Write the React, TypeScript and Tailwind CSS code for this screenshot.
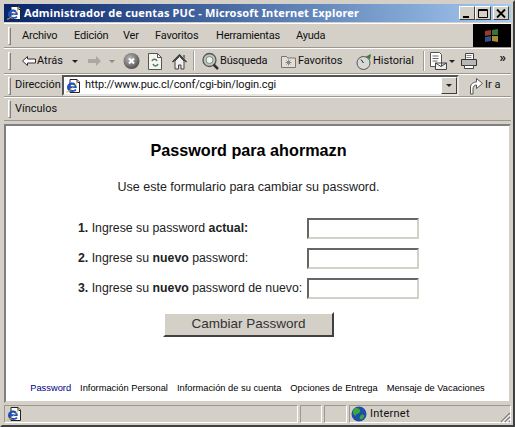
import type { ReactNode } from 'react'

const ui = 'font-["Roboto",sans-serif] text-[11px] text-[#111]'

// little IE page icon, used in the title bar, address box and status bar
function IeIcon() {
  return (
    <svg width="16" height="16" viewBox="0 0 16 16" className="shrink-0">
      <path d="M5 1.500h7l2.500 2.500v10.500H5z" fill="#fff" stroke="#222" />
      <path d="M12 1.500v3h2.500" fill="#ddd" stroke="#222" />
      <path d="M2 9.500c0-3 2.300-5 5-5s4.800 2 4.800 5.400H4.800c.2 2.400 3.400 3 5.600 1l1.200 1.400c-3.400 3-9.600 1.600-9.600-2.800zM4.900 8.200h4.400c-.4-2-3.800-2-4.400 0z" fill="#1d50c4" />
      <path d="M1 14C3 15 9 9 13 3.500" stroke="#e2b13a" fill="none" />
    </svg>
  )
}

function Grip() {
  return <div className="mr-[4px] h-[18px] w-[3px] shrink-0 border border-t-white border-l-white border-b-[#808080] border-r-[#808080]" />
}

function Sep({ className }: { className: string }) {
  return <div className={`h-[20px] w-[2px] shrink-0 border-x border-l-[#a09c94] border-r-white ${className}`} />
}

function Band({ children, h }: { children: ReactNode; h: string }) {
  return <div className={`flex shrink-0 items-center border-t border-t-white border-b border-b-[#9c9890] pl-[4px] ${h}`}>{children}</div>
}

function Caret({ className = '' }: { className?: string }) {
  return <div className={`h-0 w-0 shrink-0 border-x-[3px] border-t-[3px] border-x-transparent border-t-[#222] ${className}`} />
}

function Field() {
  return <div className="h-[21px] w-[112px] border-2 border-t-[#666] border-l-[#666] border-r-[#d4d0c8] border-b-[#d4d0c8] bg-white" />
}

function Row({ children }: { children: ReactNode }) {
  return (
    <div className="flex h-[21px] items-center justify-between">
      <span>{children}</span>
      <Field />
    </div>
  )
}

function WinBtn({ children, className = '' }: { children: ReactNode; className?: string }) {
  return (
    <div className={`flex h-[14px] w-[16px] items-center justify-center border border-t-white border-l-white border-r-[#404040] border-b-[#404040] bg-[#d4d0c8] ${className}`}>
      <svg width="12" height="11" viewBox="0 0 12 11">{children}</svg>
    </div>
  )
}

function Panel({ className, children }: { className: string; children?: ReactNode }) {
  return <div className={`flex h-full items-center border border-t-[#9c9890] border-l-[#9c9890] border-r-white border-b-white ${className}`}>{children}</div>
}

export default function App() {
  return (
    <div className={`flex h-[427px] w-[515px] flex-col overflow-hidden border-2 border-t-[#d4d0c8] border-l-[#d4d0c8] border-r-[#404040] border-b-[#404040] bg-[#d4d0c8] p-[2px] ${ui}`}>
      {/* title bar */}
      <div className="flex h-[18px] shrink-0 items-center bg-gradient-to-r from-[#0a246a] to-[#a6caf0] px-[2px]">
        <IeIcon />
        <span className='ml-[2px] flex-1 font-["Noto_Sans",sans-serif] text-[11px] font-bold tracking-[0.15px] text-white'>Administrador de cuentas PUC - Microsoft Internet Explorer</span>
        <WinBtn><path d="M2 8h6v2H2z" fill="#000" /></WinBtn>
        <WinBtn><path d="M1.500 1.500h9v8h-9zM1.500 2.500h9" fill="none" stroke="#000" /></WinBtn>
        <WinBtn className="ml-[2px]"><path d="M2 1.500l8 8M10 1.500l-8 8" stroke="#000" strokeWidth="1.800" /></WinBtn>
      </div>

      {/* menu */}
      <Band h="mt-[1px] h-[25px]">
        <Grip />
        <div className="flex flex-1 pt-[1px] pl-[7px] tracking-[-0.2px] whitespace-nowrap">
          <span className="w-[52px]">Archivo</span>
          <span className="w-[49px]">Edición</span>
          <span className="w-[32px]">Ver</span>
          <span className="w-[61px]">Favoritos</span>
          <span className="w-[80px]">Herramientas</span>
          <span>Ayuda</span>
        </div>
        <div className="flex h-[23px] w-[38px] items-center justify-center bg-black">
          <svg width="18" height="16" viewBox="0 0 18 16" className="opacity-85 blur-[0.6px]">
            <path d="M2 3l6-1v5l-6 1z" fill="#b5472a" />
            <path d="M9 2l6-1v6l-6 0z" fill="#3f8a45" />
            <path d="M2 9l6-1v5l-6 1z" fill="#3a5fa8" />
            <path d="M9 8l6 0v6l-6-1z" fill="#c8a53a" />
          </svg>
        </div>
      </Band>

      {/* toolbar */}
      <Band h="h-[26px]">
        <Grip />
        <svg width="14" height="12" viewBox="0 0 14 12" className="ml-[7px] shrink-0"><path d="M.5 6l5-4.500v2.500h8v4h-8v2.500z" fill="#fff" stroke="#333" /></svg>
        <span className="ml-[1px] w-[26px]">Atrás</span>
        <Caret className="ml-[9px]" />
        <svg width="13" height="12" viewBox="0 0 13 12" className="ml-[10px] shrink-0"><path d="M13 6L8 1v3H0v4h8v3z" fill="#a8a8a4" /></svg>
        <Caret className="ml-[8px] opacity-40" />
        <svg width="17" height="18" viewBox="0 0 17 18" className="ml-[8px] shrink-0">
          <defs>
            <radialGradient id="stop" cx="0.4" cy="0.35" r="0.7"><stop offset="0" stopColor="#bbb" /><stop offset="1" stopColor="#4a4a4a" /></radialGradient>
          </defs>
          <circle cx="8.500" cy="9" r="8" fill="url(#stop)" />
          <path d="M6 6.500l5 5m0-5l-5 5" stroke="#fff" strokeWidth="2" />
        </svg>
        <svg width="14" height="17" viewBox="0 0 14 17" className="ml-[8px] shrink-0">
          <path d="M.5.500h9l4 4v12H.5z" fill="#f4f4f0" stroke="#555" />
          <path d="M9.500.500v4h4" fill="none" stroke="#555" />
          <path d="M4 8c1-2.500 4-2.500 5 0M10 11c-1 2.500-4 2.500-5 0" fill="none" stroke="#4f7f62" strokeWidth="1.500" />
        </svg>
        <svg width="15" height="17" viewBox="0 0 15 17" className="ml-[10px] shrink-0">
          <path d="M3 8v8h3.500v-4h2.500v4H12V8L7.500 3.500z" fill="#eee" stroke="#444" />
          <path d="M.5 9l7-7 7 7" fill="none" stroke="#333" strokeWidth="1.300" />
          <path d="M11 2h2v4l-2-2z" fill="#777" />
        </svg>
        <Sep className="ml-[6px]" />
        <svg width="17" height="18" viewBox="0 0 17 18" className="ml-[7px] shrink-0">
          <circle cx="7.500" cy="8" r="6.500" fill="#bcc4bc" stroke="#555" strokeWidth="1.300" />
          <circle cx="7.500" cy="8" r="3.500" fill="#eef2ee" stroke="#7a8a7a" />
          <path d="M11.500 12.500l4.500 4.500" stroke="#333" strokeWidth="2.500" />
        </svg>
        <span className="ml-[1px] w-[48px] tracking-[-0.2px]">Búsqueda</span>
        <svg width="15" height="14" viewBox="0 0 15 14" className="ml-[13px] shrink-0">
          <path d="M.5 2.500h5l1 1.500h8v9.500H.5z" fill="#e4e0d8" stroke="#777" />
          <path d="M7.500 5.500v6M4.500 8.500h6M5.500 6.500l4 4m0-4l-4 4" stroke="#888" />
        </svg>
        <span className="ml-[2px] w-[44px] tracking-[-0.1px]">Favoritos</span>
        <svg width="16" height="17" viewBox="0 0 16 17" className="ml-[14px] shrink-0">
          <circle cx="7.500" cy="10" r="6.500" fill="#d8d8d4" stroke="#555" />
          <path d="M7.500 10L5 6.500" stroke="#222" />
          <path d="M10 3.500l5-2.500-1 5.500z" fill="#3b7a35" />
        </svg>
        <span className="ml-[1px] w-[39px]">Historial</span>
        <Sep className="ml-[11px]" />
        <svg width="17" height="18" viewBox="0 0 17 18" className="ml-[5px] shrink-0">
          <path d="M.5.500h9l2 2v12H.5z" fill="#fff" stroke="#555" />
          <path d="M2.500 4h6M2.500 6.500h6M2.500 9h5" stroke="#666" />
          <path d="M5.500 11h11v6.500h-11zM5.500 11l5.500 3.500 5.500-3.500" fill="#eee" stroke="#444" />
        </svg>
        <Caret className="ml-[2px]" />
        <svg width="16" height="16" viewBox="0 0 16 16" className="ml-[6px] shrink-0">
          <path d="M4.500.5h8v6h-8z" fill="#fff" stroke="#444" />
          <path d="M.5 6.500h15v6H.5z" fill="#b8b8b4" stroke="#333" />
          <path d="M3.500 12.500h9v3h-9z" fill="#fff" stroke="#444" />
          <path d="M5.500 2.500h5M5.500 4.500h5" stroke="#888" />
        </svg>
        <span className="ml-auto pr-[5px] pb-[8px] text-[13px] leading-none font-bold">»</span>
      </Band>

      {/* address */}
      <Band h="h-[23px]">
        <Grip />
        <span className="w-[43px]">Dirección</span>
        <div className="ml-[4px] flex h-[21px] w-[397px] shrink-0 items-center border-2 border-t-[#555] border-l-[#555] border-r-[#e8e6e0] border-b-[#e8e6e0] bg-white pl-[1px]">
          <IeIcon />
          <span className="ml-[4px] flex-1 tracking-[-0.12px]">http://www.puc.cl/conf/cgi-bin/login.cgi</span>
          <div className="flex h-[17px] w-[16px] items-center justify-center border border-t-white border-l-white border-r-[#404040] border-b-[#404040] bg-[#d4d0c8]"><Caret /></div>
        </div>
        <svg width="15" height="18" viewBox="0 0 15 18" className="ml-[10px] shrink-0"><path d="M1.500 17V10c0-3 3-5 6-5V1.500l6 5-6 5V8c-2 0-3.500 1.500-3.500 4v5z" fill="#fff" stroke="#555" /></svg>
        <span className="ml-[1px]">Ir a</span>
      </Band>

      {/* links */}
      <Band h="h-[24px]">
        <Grip />
        <span>Vínculos</span>
      </Band>

      {/* page */}
      <div className='mt-[3px] flex min-h-0 flex-1 flex-col items-center border-2 border-t-[#808080] border-l-[#808080] border-r-[#d4d0c8] border-b-[#d4d0c8] bg-white font-["Liberation_Sans",sans-serif] text-[#222]'>
        <div className="flex flex-col items-center pr-[18px]">
          <h1 className="mt-[14px] text-[16.200px] leading-[20px] font-bold text-black">Password para ahormazn</h1>
          <p className="mt-[20px] text-[12.500px] leading-[15px]">Use este formulario para cambiar su password.</p>
          <div className="mt-[23px] flex w-[341px] flex-col gap-[9px] text-[12.300px]">
            <Row><b>1.</b> Ingrese su password <b>actual:</b></Row>
            <Row><b>2.</b> Ingrese su <b>nuevo</b> password:</Row>
            <Row><b>3.</b> Ingrese su <b>nuevo</b> password de nuevo:</Row>
          </div>
          <button className="mt-[13px] h-[25px] w-[171px] border-2 border-t-white border-l-white border-r-[#404040] border-b-[#404040] bg-[#d4d0c8] text-[13.500px] text-[#333]">Cambiar Password</button>
        </div>
        <div className="mt-auto mb-[5px] flex gap-[9px] text-[9.300px] text-black">
          <span className="text-[#000080]">Password</span>
          <span>Información Personal</span>
          <span>Información de su cuenta</span>
          <span>Opciones de Entrega</span>
          <span>Mensaje de Vacaciones</span>
        </div>
      </div>

      {/* status bar */}
      <div className="relative mt-[2px] flex h-[18px] shrink-0 items-center gap-[2px]">
        <Panel className="flex-1 pl-[1px]"><IeIcon /></Panel>
        <Panel className="w-[22px]" />
        <Panel className="w-[23px]" />
        <Panel className="w-[162px] pl-[1px]">
          <svg width="16" height="16" viewBox="0 0 16 16">
            <circle cx="8" cy="8" r="7.500" fill="#1d4fa8" />
            <path d="M5 2c3 0 5 2 4 4s-3 1-4 3-3-1-3-3 1-4 3-4zM10 9c2-1 4 0 3 2s-3 3-4 2 0-3 1-4z" fill="#3aa83a" />
          </svg>
          <span className="ml-[3px] tracking-[0.25px]">Internet</span>
        </Panel>
        {/* resize grip */}
        <svg width="12" height="12" viewBox="0 0 12 12" className="absolute right-0 bottom-0">
          <path d="M11 2L2 11M11 6L6 11M11 10L10 11" stroke="#808080" strokeWidth="1.500" />
          <path d="M11 3.500L3.500 11M11 7.500L7.500 11" stroke="#fff" />
        </svg>
      </div>
    </div>
  )
}
